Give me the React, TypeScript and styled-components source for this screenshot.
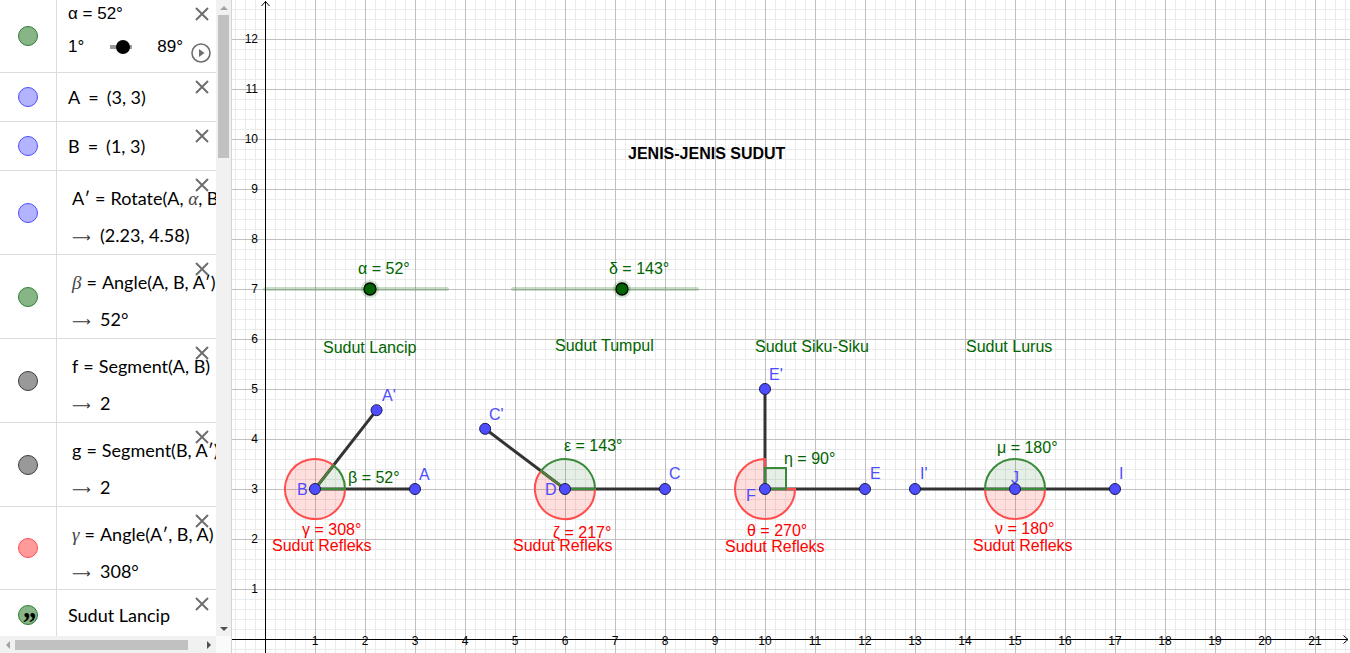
import React from "react";
import styled, { createGlobalStyle } from "styled-components";

const GlobalStyle = createGlobalStyle`
  html, body { margin: 0; padding: 0; background: #fff; overflow: hidden; }
  body { font-family: "Liberation Sans", Arial, sans-serif; }
`;

const Page = styled.div`
  display: flex;
  width: 1350px;
  height: 653px;
  overflow: hidden;
  background: #fff;
`;

/* ---------------- Algebra panel ---------------- */

const AlgebraPanel = styled.div`
  flex: none;
  width: 231px;
  display: grid;
  grid-template-columns: 216px 15px;
  grid-template-rows: 636px 17px;
  border-right: 1px solid #d4d4d4;
`;

const RowList = styled.div`
  display: flex;
  flex-direction: column;
  overflow: hidden;
`;

const Row = styled.div<{ $h: number }>`
  position: relative;
  flex: none;
  box-sizing: border-box;
  height: ${(p) => p.$h}px;
  display: grid;
  grid-template-columns: 57px 1fr;
  border-bottom: 1px solid #dcdcdc;
`;

const IconCell = styled.div`
  border-right: 1px solid #dcdcdc;
  display: flex;
  align-items: center;
  justify-content: center;
`;

const Marble = styled.span<{ $fill: string; $stroke: string }>`
  width: 18px;
  height: 18px;
  border-radius: 50%;
  background: ${(p) => p.$fill};
  border: 1px solid ${(p) => p.$stroke};
  display: flex;
  align-items: center;
  justify-content: center;
  color: #000;
  font-family: "Liberation Serif", serif;
  font-weight: bold;
  font-size: 30px;
  line-height: 1;
  overflow: hidden;
`;

const QuoteGlyph = styled.span`
  display: block;
  margin-top: 14px;
  letter-spacing: -2px;
  transform: scaleX(0.9);
`;

const Content = styled.div<{ $pad?: number }>`
  min-width: 0;
  overflow: hidden;
  padding-left: ${(p) => p.$pad ?? 11}px;
  display: flex;
  flex-direction: column;
  justify-content: center;
  font-family: Lato, "Liberation Sans", sans-serif;
  font-size: 18px;
  color: #000;
  white-space: nowrap;
`;

const TwoLine = styled.div`
  min-width: 0;
  overflow: hidden;
  padding: 15px 0 0 15px;
  display: flex;
  flex-direction: column;
  gap: 13px;
  font-family: Lato, "Liberation Sans", sans-serif;
  font-size: 18px;
  color: #000;
  white-space: nowrap;
`;

const Line = styled.div`
  line-height: 24px;
  height: 24px;
`;

const MathVar = styled.i`
  font-family: "Liberation Serif", serif;
  font-style: italic;
  font-size: 19px;
  color: #444;
`;

const Eq = styled.span<{ $m?: number }>`
  margin: 0 ${(p) => p.$m ?? 5}px;
`;

const Arrow = styled.span`
  display: inline-block;
  width: 28px;
  font-family: "DejaVu Sans", sans-serif;
  font-size: 13px;
  color: #333;
`;

const CloseBtn = styled.span`
  position: absolute;
  top: 7px;
  right: 7px;
  width: 14px;
  height: 14px;
  display: block;
`;

const SliderContent = styled.div`
  min-width: 0;
  padding: 3px 0 0 11px;
  display: flex;
  flex-direction: column;
  font-family: "Liberation Sans", Arial, sans-serif;
  font-size: 17px;
  color: #000;
`;

const SliderValue = styled.div`
  line-height: 22px;
  height: 22px;
`;

const SliderLine = styled.div`
  margin-top: 9px;
  height: 26px;
  display: flex;
  align-items: center;
`;

const Bound = styled.span<{ $ml?: number }>`
  margin-left: ${(p) => p.$ml ?? 0}px;
`;

const MiniTrack = styled.span`
  position: relative;
  margin-left: 26px;
  width: 22px;
  height: 4px;
  background: #9a9a9a;
  display: flex;
  align-items: center;
`;

const MiniKnob = styled.span`
  position: absolute;
  left: 6px;
  top: -5px;
  width: 14px;
  height: 14px;
  border-radius: 50%;
  background: #000;
`;

const PlayBtn = styled.span`
  margin-left: auto;
  margin-right: 5px;
  margin-top: 12px;
  width: 20px;
  height: 20px;
  display: block;
`;

const VScroll = styled.div`
  background: #f1f1f1;
  display: flex;
  flex-direction: column;
  align-items: center;
`;

const ArrowBox = styled.div`
  flex: none;
  width: 15px;
  height: 15px;
  display: flex;
  align-items: center;
  justify-content: center;
`;

const Tri = styled.span<{ $dir: "up" | "down" | "left" | "right"; $c: string }>`
  width: 0;
  height: 0;
  border-style: solid;
  ${(p) =>
    p.$dir === "up"
      ? `border-width: 0 4px 4px 4px; border-color: transparent transparent ${p.$c} transparent;`
      : p.$dir === "down"
      ? `border-width: 4px 4px 0 4px; border-color: ${p.$c} transparent transparent transparent;`
      : p.$dir === "left"
      ? `border-width: 4px 4px 4px 0; border-color: transparent ${p.$c} transparent transparent;`
      : `border-width: 4px 0 4px 4px; border-color: transparent transparent transparent ${p.$c};`}
`;

const VThumb = styled.div`
  width: 11px;
  height: 143px;
  background: #c1c1c1;
`;

const Spacer = styled.div`
  flex: 1;
`;

const HScroll = styled.div`
  background: #f1f1f1;
  display: flex;
  align-items: center;
`;

const HThumb = styled.div`
  width: 173px;
  height: 10px;
  background: #c1c1c1;
`;

const Corner = styled.div`
  background: #fafafa;
`;

/* ---------------- Graphics view ---------------- */

const GraphicsView = styled.div`
  flex: 1;
  height: 653px;
  overflow: hidden;
`;

const Canvas = styled.svg`
  display: block;
  text {
    font-family: "Liberation Sans", Arial, sans-serif;
    font-size: 16px;
  }
  text.axis {
    font-size: 12px;
    fill: #000;
  }
  text.title {
    font-weight: bold;
    fill: #000;
  }
`;

const OX = 265;
const OY = 639;
const U = 50;
const X = (v: number) => OX + U * v;
const Y = (v: number) => OY - U * v;

const rad = (d: number) => (d * Math.PI) / 180;
const pt = (cx: number, cy: number, r: number, d: number): [number, number] => [
  cx + r * Math.cos(rad(d)),
  cy - r * Math.sin(rad(d)),
];
const sector = (cx: number, cy: number, r: number, a0: number, a1: number) => {
  const [x0, y0] = pt(cx, cy, r, a0);
  const [x1, y1] = pt(cx, cy, r, a1);
  const large = a1 - a0 > 180 ? 1 : 0;
  return `M${cx} ${cy} L${x0.toFixed(2)} ${y0.toFixed(2)} A${r} ${r} 0 ${large} 0 ${x1.toFixed(2)} ${y1.toFixed(2)} Z`;
};

const BLUE = "#4d4dff";
const GREEN_TXT = "#006400";
const RED_TXT = "#ff0000";
const GREEN_FILL = "rgba(0,100,0,0.1)";
const GREEN_STROKE = "#3a8a3a";
const RED_FILL = "rgba(255,0,0,0.13)";
const RED_STROKE = "#ff4d4d";

const Ap: [number, number] = [1 + 2 * Math.cos(rad(52)), 3 + 2 * Math.sin(rad(52))];
const Cp: [number, number] = [6 + 2 * Math.cos(rad(143)), 3 + 2 * Math.sin(rad(143))];

const segments: [number, number, number, number][] = [
  [1, 3, 3, 3],
  [1, 3, Ap[0], Ap[1]],
  [6, 3, 8, 3],
  [6, 3, Cp[0], Cp[1]],
  [10, 3, 12, 3],
  [10, 3, 10, 5],
  [13, 3, 17, 3],
];

const points: [number, number][] = [
  [3, 3],
  [1, 3],
  Ap,
  [8, 3],
  [6, 3],
  Cp,
  [12, 3],
  [10, 3],
  [10, 5],
  [17, 3],
  [15, 3],
  [13, 3],
];

type Lbl = { x: number; y: number; t: string; c: string };
const labels: Lbl[] = [
  { x: 382, y: 401, t: "A'", c: BLUE },
  { x: 419, y: 480, t: "A", c: BLUE },
  { x: 297, y: 495, t: "B", c: BLUE },
  { x: 489, y: 420, t: "C'", c: BLUE },
  { x: 669, y: 479, t: "C", c: BLUE },
  { x: 545, y: 495, t: "D", c: BLUE },
  { x: 769, y: 380, t: "E'", c: BLUE },
  { x: 870, y: 479, t: "E", c: BLUE },
  { x: 746, y: 501, t: "F", c: BLUE },
  { x: 920, y: 479, t: "I'", c: BLUE },
  { x: 1011, y: 483, t: "J", c: BLUE },
  { x: 1119, y: 479, t: "I", c: BLUE },
  { x: 358, y: 274, t: "α = 52°", c: GREEN_TXT },
  { x: 609, y: 274, t: "δ = 143°", c: GREEN_TXT },
  { x: 323, y: 353, t: "Sudut Lancip", c: GREEN_TXT },
  { x: 555, y: 351, t: "Sudut Tumpul", c: GREEN_TXT },
  { x: 755, y: 352, t: "Sudut Siku-Siku", c: GREEN_TXT },
  { x: 966, y: 352, t: "Sudut Lurus", c: GREEN_TXT },
  { x: 348, y: 483, t: "β = 52°", c: GREEN_TXT },
  { x: 564, y: 451, t: "ε = 143°", c: GREEN_TXT },
  { x: 784, y: 464, t: "η = 90°", c: GREEN_TXT },
  { x: 997, y: 453, t: "μ = 180°", c: GREEN_TXT },
  { x: 302, y: 535, t: "γ = 308°", c: RED_TXT },
  { x: 272, y: 551, t: "Sudut Refleks", c: RED_TXT },
  { x: 553, y: 538, t: "ζ = 217°", c: RED_TXT },
  { x: 513, y: 551, t: "Sudut Refleks", c: RED_TXT },
  { x: 747, y: 536, t: "θ = 270°", c: RED_TXT },
  { x: 725, y: 552, t: "Sudut Refleks", c: RED_TXT },
  { x: 995, y: 534, t: "ν = 180°", c: RED_TXT },
  { x: 973, y: 551, t: "Sudut Refleks", c: RED_TXT },
];

const Grid: React.FC = () => {
  const minorX: number[] = [];
  const majorX: number[] = [];
  for (let x = 235; x < 1350; x += 10) {
    if ((x - OX) % 50 === 0) {
      if (x !== OX) majorX.push(x);
    } else minorX.push(x);
  }
  const minorY: number[] = [];
  const majorY: number[] = [];
  for (let y = 649; y >= -1; y -= 10) {
    if ((OY - y) % 50 === 0) {
      if (y !== OY) majorY.push(y);
    } else minorY.push(y);
  }
  return (
    <g shapeRendering="crispEdges">
      {minorX.map((x) => (
        <line key={"mx" + x} x1={x + 0.5} x2={x + 0.5} y1={0} y2={653} stroke="#ebebeb" />
      ))}
      {minorY.map((y) => (
        <line key={"my" + y} x1={232} x2={1350} y1={y + 0.5} y2={y + 0.5} stroke="#ebebeb" />
      ))}
      {majorX.map((x) => (
        <line key={"Mx" + x} x1={x + 0.5} x2={x + 0.5} y1={0} y2={653} stroke="#c0c0c0" />
      ))}
      {majorY.map((y) => (
        <line key={"My" + y} x1={232} x2={1350} y1={y + 0.5} y2={y + 0.5} stroke="#c0c0c0" />
      ))}
      <line x1={OX + 0.5} x2={OX + 0.5} y1={1} y2={653} stroke="#000" />
      <line x1={232} x2={1348} y1={OY + 0.5} y2={OY + 0.5} stroke="#000" />
    </g>
  );
};

const Axes: React.FC = () => (
  <g>
    <polyline points={`${OX - 3.5},6 ${OX + 0.5},1.5 ${OX + 4.5},6`} fill="none" stroke="#000" />
    <polyline points={`1343.5,${OY - 3.5} 1348,${OY + 0.5} 1343.5,${OY + 4.5}`} fill="none" stroke="#000" />
    {Array.from({ length: 21 }, (_, i) => i + 1).map((k) => (
      <text key={"xl" + k} className="axis" x={X(k)} y={645} textAnchor="middle">
        {k}
      </text>
    ))}
    {Array.from({ length: 12 }, (_, i) => i + 1).map((k) => (
      <text key={"yl" + k} className="axis" x={258} y={Y(k) + 4} textAnchor="end">
        {k}
      </text>
    ))}
  </g>
);

const SliderDrawing: React.FC<{ x0: number; x1: number; knob: number }> = ({ x0, x1, knob }) => (
  <g>
    <line x1={x0} x2={x1} y1={289} y2={289} stroke="rgba(0,100,0,0.22)" strokeWidth={4} strokeLinecap="round" />
    <circle cx={knob} cy={289} r={9} fill="rgba(0,100,0,0.18)" />
    <circle cx={knob} cy={289} r={6} fill="#006400" stroke="#000" strokeWidth={1.3} />
  </g>
);

const Construction: React.FC = () => {
  const B = [X(1), Y(3)] as const;
  const D = [X(6), Y(3)] as const;
  const F = [X(10), Y(3)] as const;
  const J = [X(15), Y(3)] as const;
  const r = 30;
  return (
    <g>
      <SliderDrawing x0={265} x1={447} knob={370} />
      <SliderDrawing x0={513} x1={697} knob={622} />
      {segments.map(([a, b, c, d], i) => (
        <line key={"s" + i} x1={X(a)} y1={Y(b)} x2={X(c)} y2={Y(d)} stroke="#333" strokeWidth={3} />
      ))}
      <path d={sector(B[0], B[1], r, 52, 360)} fill={RED_FILL} stroke={RED_STROKE} strokeWidth={2} />
      <path d={sector(B[0], B[1], r, 0, 52)} fill={GREEN_FILL} stroke={GREEN_STROKE} strokeWidth={2} />
      <path d={sector(D[0], D[1], r, 143, 360)} fill={RED_FILL} stroke={RED_STROKE} strokeWidth={2} />
      <path d={sector(D[0], D[1], r, 0, 143)} fill={GREEN_FILL} stroke={GREEN_STROKE} strokeWidth={2} />
      <path d={sector(F[0], F[1], r, 90, 360)} fill={RED_FILL} stroke={RED_STROKE} strokeWidth={2} />
      <rect x={F[0]} y={F[1] - 21} width={21} height={21} fill={GREEN_FILL} stroke={GREEN_STROKE} strokeWidth={2} />
      <path d={sector(J[0], J[1], r, 180, 360)} fill={RED_FILL} stroke={RED_STROKE} strokeWidth={2} />
      <path d={sector(J[0], J[1], r, 0, 180)} fill={GREEN_FILL} stroke={GREEN_STROKE} strokeWidth={2} />
      {points.map(([a, b], i) => (
        <circle key={"p" + i} cx={X(a)} cy={Y(b)} r={5.5} fill={BLUE} stroke="#1a1a55" strokeWidth={1} />
      ))}
      {labels.map((l, i) => (
        <text key={"l" + i} x={l.x} y={l.y} fill={l.c}>
          {l.t}
        </text>
      ))}
      <text className="title" x={628} y={159}>
        JENIS-JENIS SUDUT
      </text>
    </g>
  );
};

/* ---------------- small icons ---------------- */

const CloseIcon: React.FC = () => (
  <CloseBtn>
    <svg width="14" height="14" viewBox="0 0 14 14">
      <path d="M1 1 L13 13 M13 1 L1 13" stroke="#6e6e6e" strokeWidth="2" fill="none" />
    </svg>
  </CloseBtn>
);

const PlayIcon: React.FC = () => (
  <PlayBtn>
    <svg width="20" height="20" viewBox="0 0 20 20">
      <circle cx="10" cy="10" r="9" stroke="#6e6e6e" strokeWidth="1.6" fill="none" />
      <path d="M8 6 L13.5 10 L8 14 Z" fill="#6e6e6e" />
    </svg>
  </PlayBtn>
);

const MARBLES = {
  green: { f: "#88b588", s: "#2e7d2e" },
  blue: { f: "#b3b3ff", s: "#4d4dff" },
  gray: { f: "#999999", s: "#3c3c3c" },
  red: { f: "#ff9a9a", s: "#ff4d4d" },
};

type MK = keyof typeof MARBLES;

const FormulaRow: React.FC<{ marble: MK; def: React.ReactNode; value: React.ReactNode; h: number }> = ({
  marble,
  def,
  value,
  h,
}) => (
  <Row $h={h}>
    <IconCell>
      <Marble $fill={MARBLES[marble].f} $stroke={MARBLES[marble].s} />
    </IconCell>
    <TwoLine>
      <Line>{def}</Line>
      <Line>
        <Arrow>⟶</Arrow>
        {value}
      </Line>
    </TwoLine>
    <CloseIcon />
  </Row>
);

const SimpleRow: React.FC<{ marble: MK; h: number; children: React.ReactNode }> = ({ marble, h, children }) => (
  <Row $h={h}>
    <IconCell>
      <Marble $fill={MARBLES[marble].f} $stroke={MARBLES[marble].s} />
    </IconCell>
    <Content>{children}</Content>
    <CloseIcon />
  </Row>
);

export default function App() {
  return (
    <>
      <GlobalStyle />
      <Page>
        <AlgebraPanel>
          <RowList>
            <Row $h={73}>
              <IconCell>
                <Marble $fill={MARBLES.green.f} $stroke={MARBLES.green.s} />
              </IconCell>
              <SliderContent>
                <SliderValue>α = 52°</SliderValue>
                <SliderLine>
                  <Bound>1°</Bound>
                  <MiniTrack>
                    <MiniKnob />
                  </MiniTrack>
                  <Bound $ml={25}>89°</Bound>
                  <PlayIcon />
                </SliderLine>
              </SliderContent>
              <CloseIcon />
            </Row>
            <SimpleRow marble="blue" h={49}>
              <span>
                A<Eq $m={8}>=</Eq>(3, 3)
              </span>
            </SimpleRow>
            <SimpleRow marble="blue" h={49}>
              <span>
                B<Eq $m={8}>=</Eq>(1, 3)
              </span>
            </SimpleRow>
            <FormulaRow
              marble="blue"
              h={84}
              def={
                <>
                  A′<Eq>=</Eq>Rotate(A, <MathVar>α</MathVar>, B)
                </>
              }
              value="(2.23, 4.58)"
            />
            <FormulaRow
              marble="green"
              h={84}
              def={
                <>
                  <MathVar>β</MathVar>
                  <Eq>=</Eq>Angle(A, B, A′)
                </>
              }
              value="52°"
            />
            <FormulaRow
              marble="gray"
              h={84}
              def={
                <>
                  f<Eq>=</Eq>Segment(A, B)
                </>
              }
              value="2"
            />
            <FormulaRow
              marble="gray"
              h={84}
              def={
                <>
                  g<Eq>=</Eq>Segment(B, A′)
                </>
              }
              value="2"
            />
            <FormulaRow
              marble="red"
              h={83}
              def={
                <>
                  <MathVar>γ</MathVar>
                  <Eq>=</Eq>Angle(A′, B, A)
                </>
              }
              value="308°"
            />
            <Row $h={50}>
              <IconCell>
                <Marble $fill={MARBLES.green.f} $stroke={MARBLES.green.s}>
                  <QuoteGlyph>”</QuoteGlyph>
                </Marble>
              </IconCell>
              <Content>Sudut Lancip</Content>
              <CloseIcon />
            </Row>
          </RowList>
          <VScroll>
            <ArrowBox>
              <Tri $dir="up" $c="#a3a3a3" />
            </ArrowBox>
            <VThumb />
            <Spacer />
            <ArrowBox>
              <Tri $dir="down" $c="#505050" />
            </ArrowBox>
          </VScroll>
          <HScroll>
            <ArrowBox>
              <Tri $dir="left" $c="#a3a3a3" />
            </ArrowBox>
            <HThumb />
            <Spacer />
            <ArrowBox>
              <Tri $dir="right" $c="#505050" />
            </ArrowBox>
          </HScroll>
          <Corner />
        </AlgebraPanel>
        <GraphicsView>
          <Canvas width={1118} height={653} viewBox="232 0 1118 653">
            <Grid />
            <Axes />
            <Construction />
          </Canvas>
        </GraphicsView>
      </Page>
    </>
  );
}
